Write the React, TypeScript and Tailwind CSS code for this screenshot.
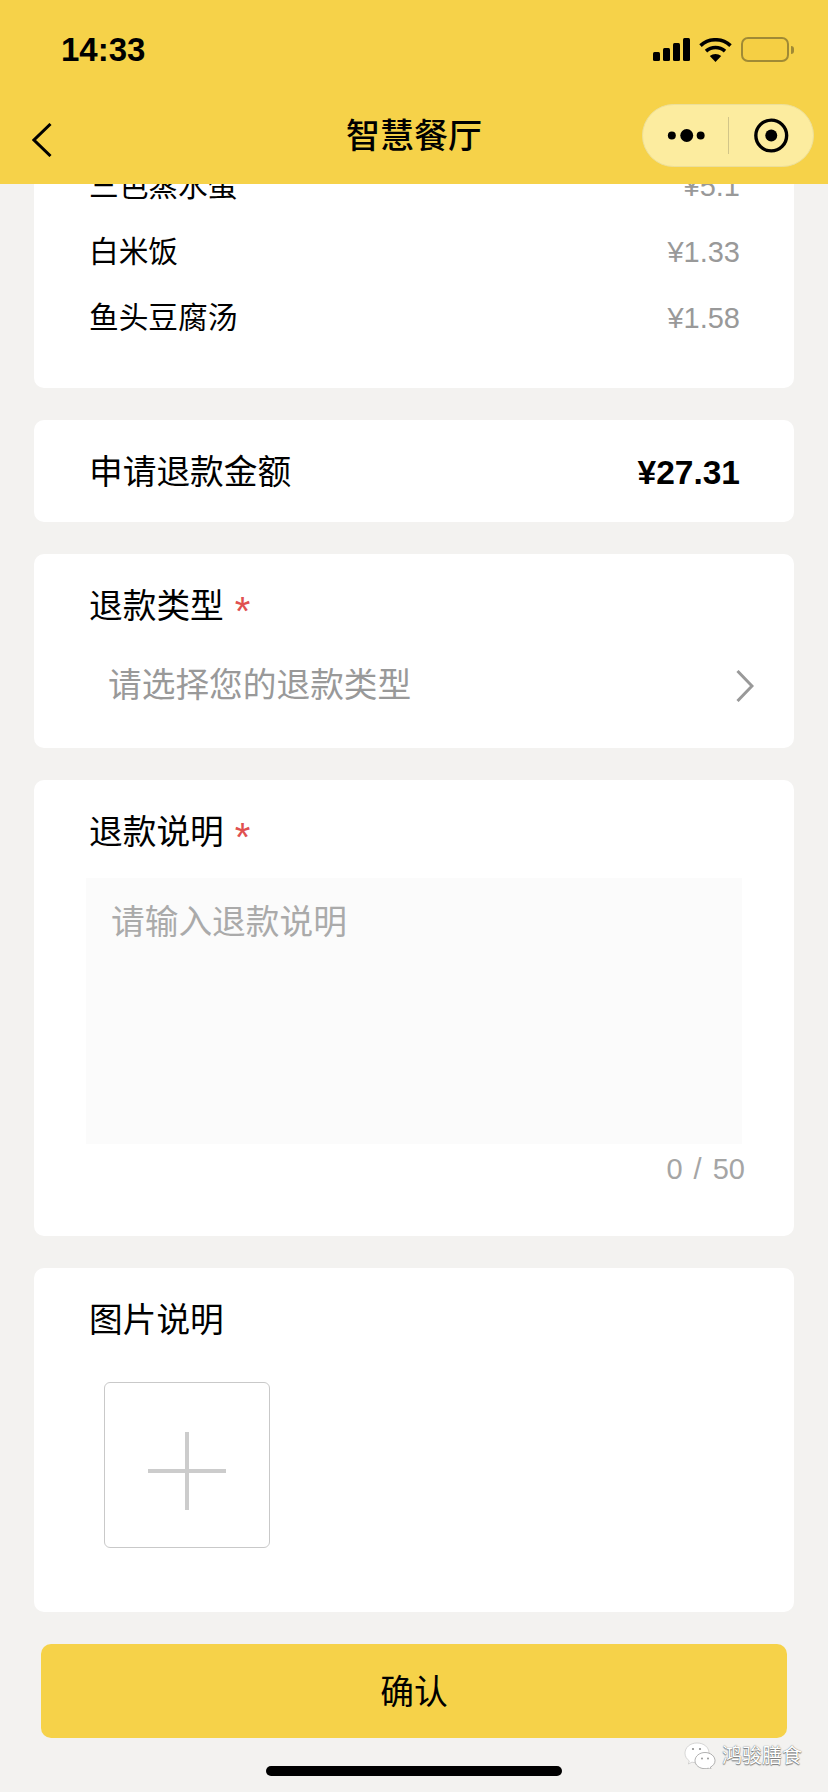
import React from "react";

const FONT = "[font-family:'Liberation_Sans','Noto_Sans_CJK_SC',sans-serif]";

function Row({ name, price }: { name: string; price: string }) {
  return (
    <div className="flex h-[66px] shrink-0 items-center justify-between">
      <span className="text-[29.7px] leading-none text-black">{name}</span>
      <span className="text-[29px] leading-none text-[#999999]">{price}</span>
    </div>
  );
}

function Label({ text, required }: { text: string; required?: boolean }) {
  return (
    <div className="flex h-[42px] items-center pt-[2px]">
      <span className="text-[33.7px] leading-none text-black">{text}</span>
      {required && <span className="ml-[11px] h-[30px] text-[40px] leading-[38px] text-[#e05050]">*</span>}
    </div>
  );
}

function Signal() {
  return (
    <svg width="37" height="23" viewBox="0 0 37 23" fill="#000">
      <rect x="0" y="14" width="7" height="9" rx="1.5" />
      <rect x="10" y="10" width="7" height="13" rx="1.5" />
      <rect x="20" y="5" width="7" height="18" rx="1.5" />
      <rect x="30" y="0" width="7" height="23" rx="1.5" />
    </svg>
  );
}

function Wifi() {
  return (
    <svg width="33" height="24" viewBox="0 0 33 24" fill="none" stroke="#000" strokeWidth="3.6">
      <path d="M1.5 7.6C10 -0.2 23 -0.2 31.5 7.6" />
      <path d="M7 13.2C12.6 8.2 20.4 8.2 26 13.2" />
      <path d="M16.5 24L10.8 18C14 15.2 19 15.2 22.2 18Z" fill="#000" stroke="none" />
    </svg>
  );
}

function Battery() {
  return (
    <div className="flex items-center">
      <div className="h-[25px] w-[48px] rounded-[7px] border-2 border-[#a08a35] bg-[#f5ca3f]/40" />
      <div className="ml-[2px] h-[8px] w-[3px] rounded-r-[3px] bg-[#a08a35]" />
    </div>
  );
}

function Capsule() {
  return (
    <div className="flex h-[63px] w-[172px] items-center rounded-full border border-[#ecdf9a] bg-[#fcec9f]">
      <svg width="85" height="37" viewBox="0 0 85 37" fill="#000">
        <circle cx="29" cy="18.5" r="4" />
        <circle cx="44" cy="18.5" r="6.5" />
        <circle cx="58" cy="18.5" r="4" />
      </svg>
      <div className="h-[37px] w-px bg-[#d2c588]" />
      <svg width="85" height="37" viewBox="0 0 85 37" fill="none">
        <circle cx="42.5" cy="18.5" r="15.5" stroke="#000" strokeWidth="3.4" />
        <circle cx="42.5" cy="18.5" r="6" fill="#000" />
      </svg>
    </div>
  );
}

function WeChatMark() {
  return (
    <svg width="32" height="27" viewBox="0 0 32 27">
      <path d="M13 1C6 1 1 5.6 1 11.2c0 3.2 1.7 5.8 4.3 7.7L4.4 22l3.6-1.9c1.4.4 2.6.6 4 .6C20 20.7 25 16 25 11 25 5.4 20 1 13 1Z" fill="#fff" stroke="#bdbdbd" strokeWidth="0.6" />
      <path d="M21 10.5c-5.5 0-10 3.7-10 8.2s4.5 8 10 8c1.2 0 2.2-.1 3.2-.5l3 1.6-.8-2.6c2.8-1.5 4.6-3.8 4.6-6.5 0-4.5-4.5-8.2-10-8.2Z" fill="#fff" stroke="#8f8f8f" strokeWidth="0.7" />
      <circle cx="9" cy="7" r="1.1" fill="#8f8f8f" />
      <circle cx="16" cy="7" r="1.1" fill="#8f8f8f" />
      <circle cx="18" cy="16.5" r="0.9" fill="#8f8f8f" />
      <circle cx="24" cy="16.5" r="0.9" fill="#8f8f8f" />
    </svg>
  );
}

export default function App() {
  return (
    <div className={`relative flex h-[1792px] w-[828px] flex-col overflow-hidden bg-[#f3f2f0] ${FONT}`}>
      <header className="flex h-[184px] shrink-0 flex-col bg-[#f6d249]">
        <div className="flex h-[100px] items-start justify-between pl-[61px] pr-[34px] pt-[31px]">
          <span className="text-[33px] font-semibold leading-[38px] text-black">14:33</span>
          <div className="mt-[6px] flex items-center gap-[9px]">
            <Signal />
            <Wifi />
            <Battery />
          </div>
        </div>
        <div className="relative flex items-start justify-between pl-[32px] pr-[14px] pt-[4px]">
          <svg className="mt-[19px]" width="20" height="34" viewBox="0 0 20 34" fill="none" stroke="#000" strokeWidth="3">
            <path d="M18.5 1L2 17l16.5 16" />
          </svg>
          <span className="absolute left-0 right-0 top-[13px] text-center text-[34px] font-medium leading-[42px] text-black [font-family:'Noto_Sans_CJK_SC',sans-serif]">智慧餐厅</span>
          <Capsule />
        </div>
      </header>

      <main className="flex flex-1 flex-col px-[34px]">
        <section className="flex h-[204px] flex-col justify-end overflow-hidden rounded-b-[10px] bg-white pb-[37px] pl-[55px] pr-[54px]">
          <Row name="三色蒸水蛋" price="¥5.1" />
          <Row name="白米饭" price="¥1.33" />
          <Row name="鱼头豆腐汤" price="¥1.58" />
        </section>

        <section className="mt-[32px] flex h-[102px] items-center justify-between rounded-[10px] bg-white pl-[55px] pr-[54px]">
          <span className="pt-[3px] text-[33.7px] leading-none text-black">申请退款金额</span>
          <span className="pt-[3px] text-[33.5px] font-bold leading-none text-black">¥27.31</span>
        </section>

        <section className="mt-[32px] h-[194px] rounded-[10px] bg-white pl-[55px] pr-[40px] pt-[31px]">
          <Label text="退款类型" required />
          <div className="mt-[38px] flex h-[42px] items-center justify-between pl-[19px]">
            <span className="text-[33.7px] leading-none text-[#999999]">请选择您的退款类型</span>
            <svg width="18" height="32" viewBox="0 0 18 32" fill="none" stroke="#999999" strokeWidth="3">
              <path d="M1.5 1L16 16 1.5 31" />
            </svg>
          </div>
        </section>

        <section className="mt-[32px] h-[456px] rounded-[10px] bg-white pl-[52px] pr-[52px] pt-[31px]">
          <div className="pl-[3px]">
            <Label text="退款说明" required />
          </div>
          <div className="mt-[25px] h-[266px] bg-[#fbfbfb] px-[25px] pt-[23px]">
            <span className="text-[33.7px] leading-[42px] text-[#aaaaaa]">请输入退款说明</span>
          </div>
          <div className="mr-[-3px] mt-[8px] text-right text-[29px] leading-[34px] [word-spacing:3px] text-[#a5a5a5]">0 / 50</div>
        </section>

        <section className="mt-[32px] h-[344px] rounded-[10px] bg-white pl-[55px] pt-[31px]">
          <Label text="图片说明" />
          <div className="ml-[15px] mt-[41px] flex h-[166px] w-[166px] items-center justify-center rounded-[6px] border border-[#c9c9c9] pt-[12px]">
            <div className="relative flex h-[78px] w-[78px] items-center justify-center">
              <div className="h-[4px] w-[78px] bg-[#cccccc]" />
              <div className="absolute h-[78px] w-[4px] bg-[#cccccc]" />
            </div>
          </div>
        </section>

        <button className="mx-[7px] mt-[32px] flex h-[94px] items-center justify-center rounded-[10px] bg-[#f6d249] pt-[3px] text-[33.7px] text-black">
          确认
        </button>

        <div className="mt-[28px] flex justify-center">
          <div className="h-[10px] w-[296px] rounded-full bg-black" />
        </div>
      </main>

      <div className="absolute left-[684px] top-[1742px] flex items-center gap-[6px]">
        <WeChatMark />
        <span className="text-[20px] leading-[24px] text-white [text-shadow:0_0_1px_#555,0_1px_1px_#777]">鸿骏膳食</span>
      </div>
    </div>
  );
}
